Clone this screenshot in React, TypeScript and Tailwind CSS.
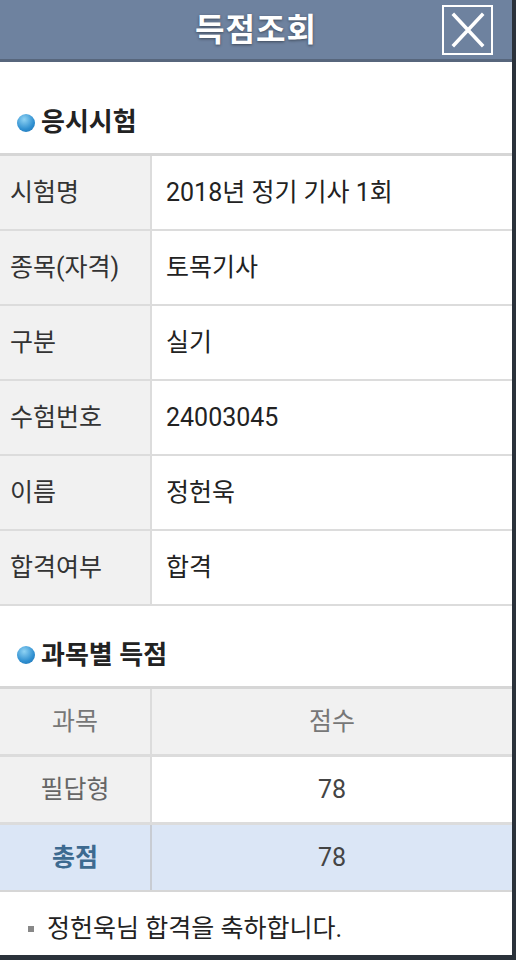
import React from "react";

const infoRows: [string, string][] = [
  ["시험명", "2018년 정기 기사 1회"],
  ["종목(자격)", "토목기사"],
  ["구분", "실기"],
  ["수험번호", "24003045"],
  ["이름", "정헌욱"],
  ["합격여부", "합격"],
];

const Dot = () => (
  <span className="inline-block w-[18px] h-[18px] rounded-full bg-[radial-gradient(circle_at_40%_30%,#8fd3f4,#2f8fd0_60%,#1f6fae)] mr-[6px]" />
);

export default function App() {
  return (
    <div
      className="w-[516px] h-[960px] bg-[#2b323b] flex flex-col overflow-hidden"
      style={{ fontFamily: '"Roboto", "Noto Sans CJK KR", sans-serif' }}
    >
      <div className="w-[512px] flex-1 bg-white flex flex-col">
        {/* header */}
        <div className="relative h-[62px] bg-[#6e829f] border-b-[3px] border-[#57667c] flex items-center justify-center">
          <h1 className="text-[32px] font-bold text-white tracking-[1px] [text-shadow:0_1px_3px_rgba(0,0,0,0.45)]">
            득점조회
          </h1>
          <button className="absolute right-[19px] top-[5px] w-[51px] h-[50px] border-2 border-white flex items-center justify-center">
            <svg width="36" height="36" viewBox="0 0 36 36" stroke="white" strokeWidth="3.5" strokeLinecap="square">
              <path d="M4 3 L32 33 M32 3 L4 33" />
            </svg>
          </button>
        </div>

        {/* section 1 */}
        <div className="flex items-center h-[91px] pt-[30px] pl-[17px]">
          <Dot />
          <span className="text-[26px] font-bold text-[#222]">응시시험</span>
        </div>
        <div className="border-t-[3px] border-[#d6d6d6]">
          {infoRows.map(([k, v]) => (
            <div key={k} className="flex h-[75px] border-b-2 border-[#dcdcdc]">
              <div className="w-[152px] bg-[#f1f1f1] border-r-2 border-[#dcdcdc] flex items-center pl-[10px] text-[25px] text-[#333]">
                {k}
              </div>
              <div className="flex-1 flex items-center pl-[14px] text-[25px] text-[#222]">{v}</div>
            </div>
          ))}
        </div>

        {/* section 2 */}
        <div className="flex items-center h-[80px] pt-[18px] pl-[17px]">
          <Dot />
          <span className="text-[26px] font-bold text-[#222]">과목별 득점</span>
        </div>
        <div className="border-t-[3px] border-[#d6d6d6]">
          <div className="flex h-[68px] bg-[#f1f1f1] border-b-[3px] border-[#dcdcdc]">
            <div className="w-[152px] border-r-2 border-[#dcdcdc] flex items-center justify-center text-[25px] text-[#777]">
              과목
            </div>
            <div className="flex-1 flex items-center justify-center text-[25px] text-[#777]">점수</div>
          </div>
          <div className="flex h-[68px] border-b-[3px] border-[#dcdcdc]">
            <div className="w-[152px] bg-[#f1f1f1] border-r-2 border-[#dcdcdc] flex items-center justify-center text-[25px] text-[#666]">
              필답형
            </div>
            <div className="flex-1 flex items-center justify-center text-[25px] text-[#444]">78</div>
          </div>
          <div className="flex h-[67px] bg-[#dbe6f6] border-b-2 border-[#d6d6d6]">
            <div className="w-[152px] border-r-2 border-[#c8ccd3] flex items-center justify-center text-[25px] font-bold text-[#3d6a90]">
              총점
            </div>
            <div className="flex-1 flex items-center justify-center text-[25px] text-[#444]">78</div>
          </div>
        </div>

        <div className="flex items-center pl-[28px] pt-[18px] text-[25px] text-[#222]">
          <span className="inline-block w-[6px] h-[6px] bg-[#888] mr-[13px]" />
          정헌욱님 합격을 축하합니다.
        </div>
      </div>
      <div className="h-[5px]" />
    </div>
  );
}
